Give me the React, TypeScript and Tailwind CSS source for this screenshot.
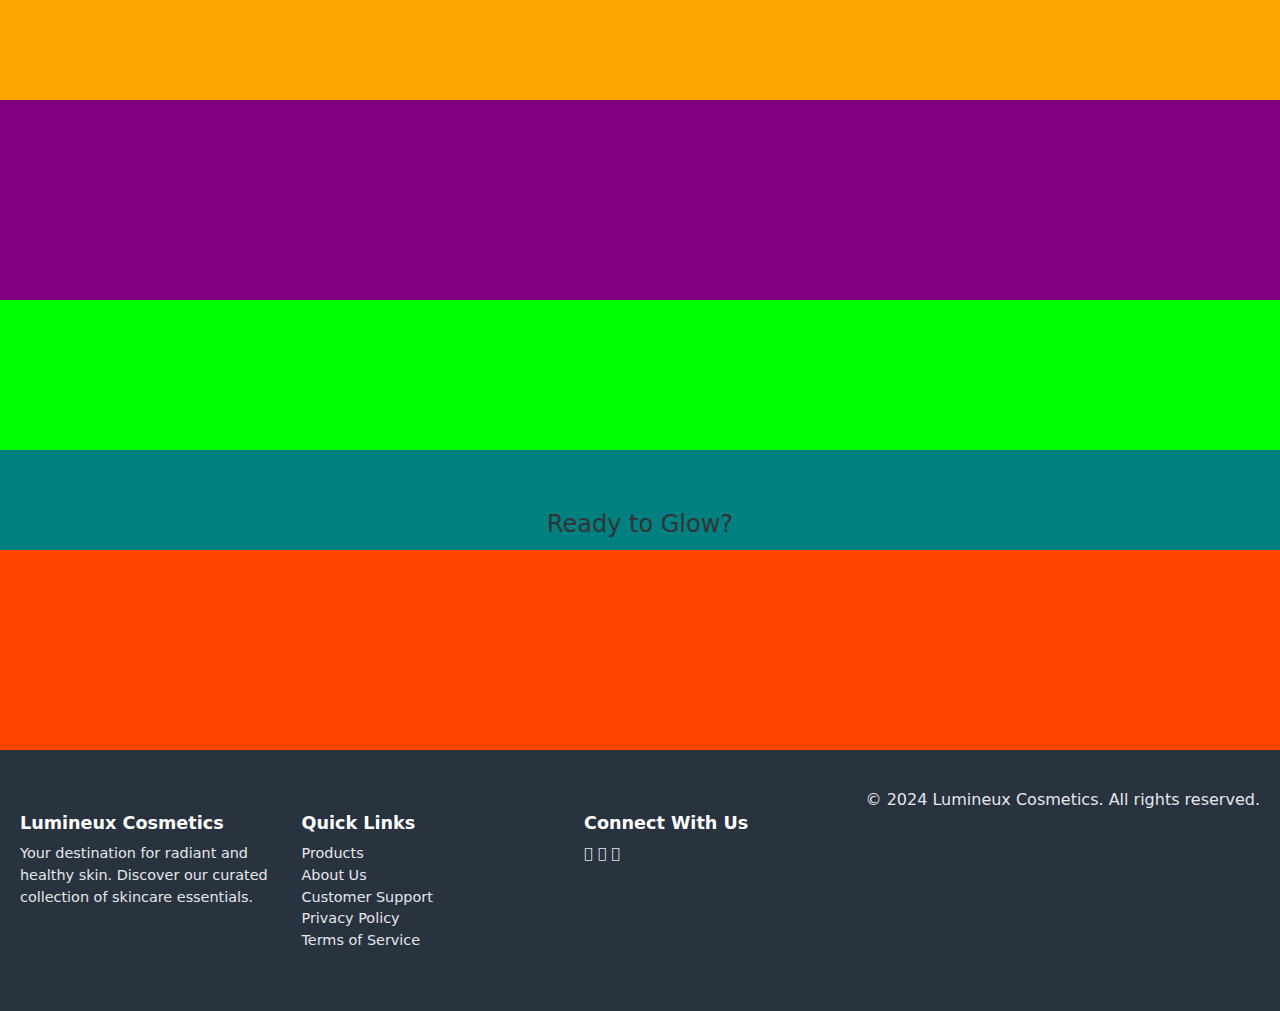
import React from 'react';

const links = ['Products', 'About Us', 'Customer Support', 'Privacy Policy', 'Terms of Service'];

const App: React.FC = () => {
  return (
    <div className="min-h-screen font-['DejaVu_Sans',sans-serif]">
      <section className="h-[100px] bg-[#ffa500]" />
      <section className="h-[200px] bg-[#800080]" />
      <section className="h-[150px] bg-[#00ff00]" />
      <section className="h-[100px] bg-[#008080] pt-[56px] text-center">
        <h2 className="text-2xl leading-9 text-[#333333]">Ready to Glow?</h2>
      </section>
      <section className="h-[200px] bg-[#ff4500]" />

      <footer className="h-[261px] bg-[#29323f] px-5 pt-[38px] text-[#e5e7eb]">
        <div className="flex gap-5">
          <div className="mt-[22px] w-[261.5px]">
            <h3 className="text-[17.6px] font-bold leading-[27px] text-white mb-[5px]">Lumineux Cosmetics</h3>
            <p className="text-[14.4px] leading-[22px]">
              Your destination for radiant and healthy skin. Discover our curated collection of skincare essentials.
            </p>
          </div>
          <div className="mt-[22px] w-[261.5px]">
            <h3 className="text-[17.6px] font-bold leading-[27px] text-white mb-[6px]">Quick Links</h3>
            <ul className="text-[14.4px] leading-[21.75px]">
              {links.map((l) => (
                <li key={l}>
                  <a href="#">{l}</a>
                </li>
              ))}
            </ul>
          </div>
          <div className="mt-[22px] w-[261.5px] pl-px">
            <h3 className="text-[17.6px] font-bold leading-[27px] text-white mb-[5px]">Connect With Us</h3>
            <div className="flex gap-[5px] text-[14.4px] leading-[22px]">
              <a href="#">{'\uf09a'}</a>
              <a href="#">{'\uf16d'}</a>
              <a href="#">{'\uf099'}</a>
            </div>
          </div>
          <p className="flex-1 text-right text-base leading-6">© 2024 Lumineux Cosmetics. All rights reserved.</p>
        </div>
      </footer>
    </div>
  );
};

export default App;
